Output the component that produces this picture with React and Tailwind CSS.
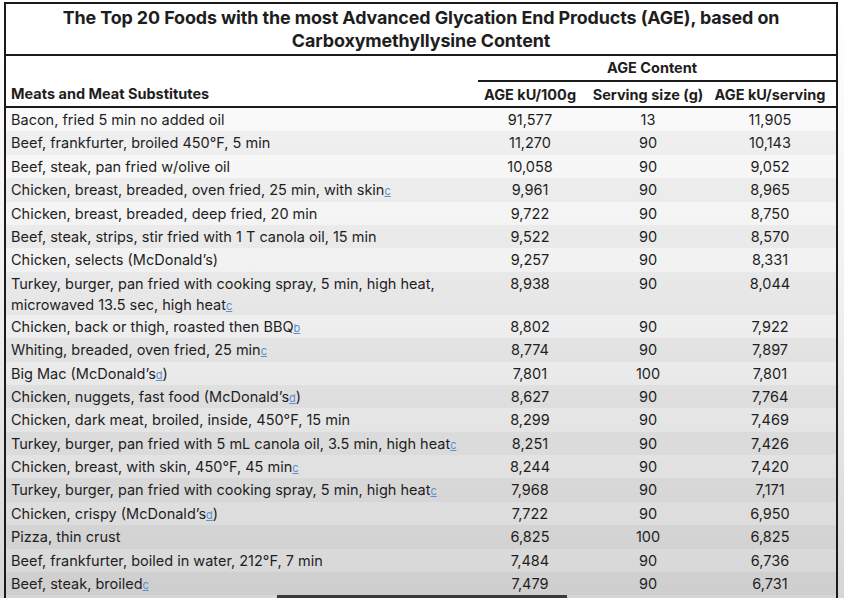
import React from "react";

const rows = [
  ["Bacon, fried 5 min no added oil", null, "91,577", "13", "11,905"],
  ["Beef, frankfurter, broiled 450°F, 5 min", null, "11,270", "90", "10,143"],
  ["Beef, steak, pan fried w/olive oil", null, "10,058", "90", "9,052"],
  ["Chicken, breast, breaded, oven fried, 25 min, with skin", "c", "9,961", "90", "8,965"],
  ["Chicken, breast, breaded, deep fried, 20 min", null, "9,722", "90", "8,750"],
  ["Beef, steak, strips, stir fried with 1 T canola oil, 15 min", null, "9,522", "90", "8,570"],
  ["Chicken, selects (McDonald’s)", null, "9,257", "90", "8,331"],
  ["Turkey, burger, pan fried with cooking spray, 5 min, high heat, microwaved 13.5 sec, high heat", "c", "8,938", "90", "8,044"],
  ["Chicken, back or thigh, roasted then BBQ", "b", "8,802", "90", "7,922"],
  ["Whiting, breaded, oven fried, 25 min", "c", "8,774", "90", "7,897"],
  ["Big Mac (McDonald’s", "d", "7,801", "100", "7,801", ")"],
  ["Chicken, nuggets, fast food (McDonald’s", "d", "8,627", "90", "7,764", ")"],
  ["Chicken, dark meat, broiled, inside, 450°F, 15 min", null, "8,299", "90", "7,469"],
  ["Turkey, burger, pan fried with 5 mL canola oil, 3.5 min, high heat", "c", "8,251", "90", "7,426"],
  ["Chicken, breast, with skin, 450°F, 45 min", "c", "8,244", "90", "7,420"],
  ["Turkey, burger, pan fried with cooking spray, 5 min, high heat", "c", "7,968", "90", "7,171"],
  ["Chicken, crispy (McDonald’s", "d", "7,722", "90", "6,950", ")"],
  ["Pizza, thin crust", null, "6,825", "100", "6,825"],
  ["Beef, frankfurter, boiled in water, 212°F, 7 min", null, "7,484", "90", "6,736"],
  ["Beef, steak, broiled", "c", "7,479", "90", "6,731"],
];

function Note({ children }) {
  return (
    <span className="text-[11px] leading-none text-[#5b8fd0] underline underline-offset-1">
      {children}
    </span>
  );
}

export default function App() {
  return (
    <div
      className="relative h-[598px] w-[844px] overflow-hidden bg-gradient-to-b from-white via-[#f0f0f0] to-[#d6d6d6] pl-[4px] pr-[6px] pt-[2px] text-[#1e1e1e]"
      style={{ fontFamily: "Inter, 'Liberation Sans', sans-serif" }}
    >
      <div className="h-[600px] border-2 border-[#1a1a1a]">
        <div className="flex h-[52px] flex-col items-center justify-center border-b-2 border-[#1a1a1a] bg-white text-center text-[17.9px] font-bold leading-[23px] tracking-[-0.1px]">
          <div>The Top 20 Foods with the most Advanced Glycation End Products (AGE), based on</div>
          <div>Carboxymethyllysine Content</div>
        </div>
        <div className="grid grid-cols-[1fr_104px_132px_122px] border-b-2 border-[#1a1a1a] bg-white text-[14.5px] font-bold">
          <div className="row-span-2 flex items-end pl-[5px] leading-[25px]">
            Meats and Meat Substitutes
          </div>
          <div className="col-span-3 h-[26px] border-b-2 border-[#1a1a1a] pr-[10px] text-center leading-[24px]">
            AGE Content
          </div>
          <div className="h-[24px] text-center leading-[25px]">AGE kU/100g</div>
          <div className="h-[24px] text-center leading-[25px]">Serving size (g)</div>
          <div className="h-[24px] pr-[10px] text-center leading-[25px]">AGE kU/serving</div>
        </div>
        <div className="text-[14.5px]">
          {rows.map(([name, note, a, b, c, tail], i) => (
            <div
              key={i}
              className={`grid grid-cols-[1fr_104px_132px_122px] ${name.length > 80 ? "h-[43px] pt-[1px] leading-[21px]" : "h-[23.4px] leading-[23px]"} ${i % 2 === 1 ? "bg-black/[0.035]" : ""}`}
            >
              <div className="pl-[5px] pr-[20px]">
                {name}
                {note && <Note>{note}</Note>}
                {tail}
              </div>
              <div className="text-center">{a}</div>
              <div className="text-center">{b}</div>
              <div className="pr-[10px] text-center">{c}</div>
            </div>
          ))}
        </div>
      </div>
      <div className="absolute bottom-0 left-[277px] h-[3px] w-[290px] bg-[#3a3a3a]" />
    </div>
  );
}
